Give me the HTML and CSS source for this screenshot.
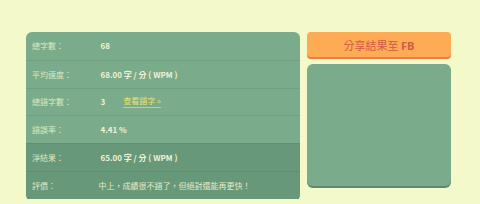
FILE: index.html
```html
<!DOCTYPE html>
<html lang="zh-TW">
<head>
  <meta charset="UTF-8">
  <title>打字測驗結果</title>
  <meta name="viewport" content="width=device-width, initial-scale=1">
  <link rel="stylesheet" href="styles.css">
</head>
<body>
  <div class="result-wrap">
    <div class="result-table">
      <div class="stat-row">
        <span class="stat-label">總字數：</span>
        <span class="stat-value">68</span>
      </div>
      <div class="stat-row">
        <span class="stat-label">平均速度：</span>
        <span class="stat-value">68.00 字 / 分 ( WPM )</span>
      </div>
      <div class="stat-row">
        <span class="stat-label">總錯字數：</span>
        <span class="stat-value">3</span>
        <a class="typo-link" href="#">查看錯字 »</a>
      </div>
      <div class="stat-row">
        <span class="stat-label">錯誤率：</span>
        <span class="stat-value">4.41 %</span>
      </div>
      <div class="stat-row dark">
        <span class="stat-label">淨結果：</span>
        <span class="stat-value">65.00 字 / 分 ( WPM )</span>
      </div>
      <div class="stat-row dark">
        <span class="stat-label">評價：</span>
        <span class="stat-comment">中上，成績很不錯了，但絕對還能再更快！</span>
      </div>
    </div>
    <div class="side-col">
      <button class="share-btn">分享結果至 <b>FB</b></button>
      <div class="side-box"></div>
    </div>
  </div>
</body>
</html>
```

FILE: styles.css
```css
html, body {
  margin: 0;
  padding: 0;
  background: #f3f9c9;
  font-family: "Noto Sans CJK TC", "Noto Sans", sans-serif;
}
.result-wrap {
  display: flex;
  align-items: flex-start;
  gap: 7px;
  padding: 32px 0 0 26px;
}
.result-table {
  width: 274px;
  border-radius: 6px;
  overflow: hidden;
  background: #7aab8b;
  box-shadow: 0 2px 0 #5d8a6b;
}
.stat-row {
  display: flex;
  align-items: center;
  height: 27.8px;
  box-sizing: border-box;
  font-size: 8px;
  border-top: 1px solid #6fa080;
}
.stat-row:first-child {
  border-top: none;
}
.stat-row.dark {
  background: #68987a;
  border-top-color: #5f8e70;
}
.stat-label {
  width: 68.5px;
  padding-left: 6px;
  color: #dde9bd;
  flex-shrink: 0;
}
.stat-value {
  color: #eef1d6;
  font-weight: bold;
}
.stat-comment {
  color: #e3ecc8;
  margin-left: -2px;
  white-space: nowrap;
}
.typo-link {
  margin-left: 18px;
  color: #e8e36a;
  text-decoration: none;
  border-bottom: 1px solid #c8d84a;
  line-height: 1.3;
}
.side-col {
  width: 144px;
  display: flex;
  flex-direction: column;
  gap: 7px;
}
.share-btn {
  height: 25px;
  padding: 0;
  border: none;
  border-radius: 4px;
  background: #fdac55;
  box-shadow: 0 2px 0 #f27b3f;
  color: #d35a48;
  font-family: "Noto Sans CJK TC", "Noto Sans", sans-serif;
  font-size: 11px;
  cursor: pointer;
}
.share-btn b {
  font-family: "Open Sans", "Noto Sans", sans-serif;
  font-weight: bold;
}
.side-box {
  height: 122px;
  border-radius: 6px;
  background: #7aab8b;
  box-shadow: 0 2px 0 #5d8a6b;
}
```
